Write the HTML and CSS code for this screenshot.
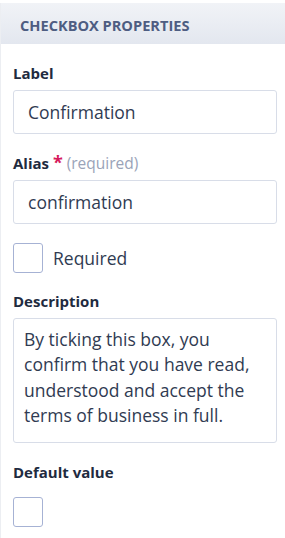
FILE: index.html
```html
<!DOCTYPE html>
<html>
<head>
<meta charset="utf-8">
<link rel="stylesheet" href="styles.css">
</head>
<body>
<div class="panel">
  <div class="panel-header">CHECKBOX PROPERTIES</div>
  <div class="panel-body">
    <div class="field">
      <div class="field-label">Label</div>
      <div class="input">Confirmation</div>
    </div>
    <div class="field">
      <div class="field-label">Alias <span class="req-star">*</span> <span class="req-note">(required)</span></div>
      <div class="input">confirmation</div>
    </div>
    <div class="check-row">
      <div class="checkbox"></div>
      <span class="check-text">Required</span>
    </div>
    <div class="field">
      <div class="field-label">Description</div>
      <div class="textarea">By ticking this box, you confirm that you have read, understood and accept the terms of business in full.</div>
    </div>
    <div class="field field-last">
      <div class="field-label">Default value</div>
      <div class="checkbox"></div>
    </div>
  </div>
</div>
</body>
</html>
```
FILE: styles.css
```css
html, body {
  margin: 0;
  padding: 0;
  background: #ffffff;
}
body {
  font-family: "Open Sans", "Noto Sans", sans-serif;
  width: 285px;
  height: 538px;
  overflow: hidden;
}
.panel {
  margin-top: 3px;
  border-left: 1px solid #eceef2;
  min-height: 535px;
  box-sizing: border-box;
}
.panel-header {
  height: 41px;
  box-sizing: border-box;
  padding-left: 19px;
  padding-top: 2px;
  display: flex;
  align-items: center;
  background: linear-gradient(#f1f3f7, #e3e7ef);
  color: #4e5d82;
  font-weight: 700;
  font-size: 14.6px;
}
.panel-body {
  padding: 19px 8px 0 12px;
  display: flex;
  flex-direction: column;
}
.field {
  display: flex;
  flex-direction: column;
  margin-bottom: 19px;
}
.field-label {
  font-size: 15px;
  font-weight: 700;
  color: #1f2b3f;
  line-height: 20px;
  height: 20px;
  margin-bottom: 7px;
  white-space: nowrap;
}
.req-star {
  color: #d6195c;
  font-size: 18px;
  line-height: 1;
}
.req-note {
  color: #9aa3b8;
  font-weight: 400;
  font-size: 15.5px;
  line-height: 1;
}
.input {
  height: 44px;
  box-sizing: border-box;
  border: 1px solid #d8dde8;
  border-radius: 3px;
  padding: 0 14px;
  display: flex;
  align-items: center;
  font-size: 17.5px;
  color: #303b52;
}
.textarea {
  box-sizing: border-box;
  border: 1px solid #d8dde8;
  border-radius: 3px;
  padding: 8px 10px 7px 10px;
  font-size: 17.5px;
  line-height: 25.4px;
  color: #303b52;
  height: 125px;
}
.check-row {
  display: flex;
  align-items: center;
  gap: 10px;
  margin-bottom: 18px;
}
.checkbox {
  width: 30px;
  height: 30px;
  box-sizing: border-box;
  border: 1px solid #a6b2d4;
  border-radius: 3px;
}
.check-text {
  font-size: 17.5px;
  color: #303b52;
}
.field-last .field-label {
  margin-bottom: 15px;
}
```
